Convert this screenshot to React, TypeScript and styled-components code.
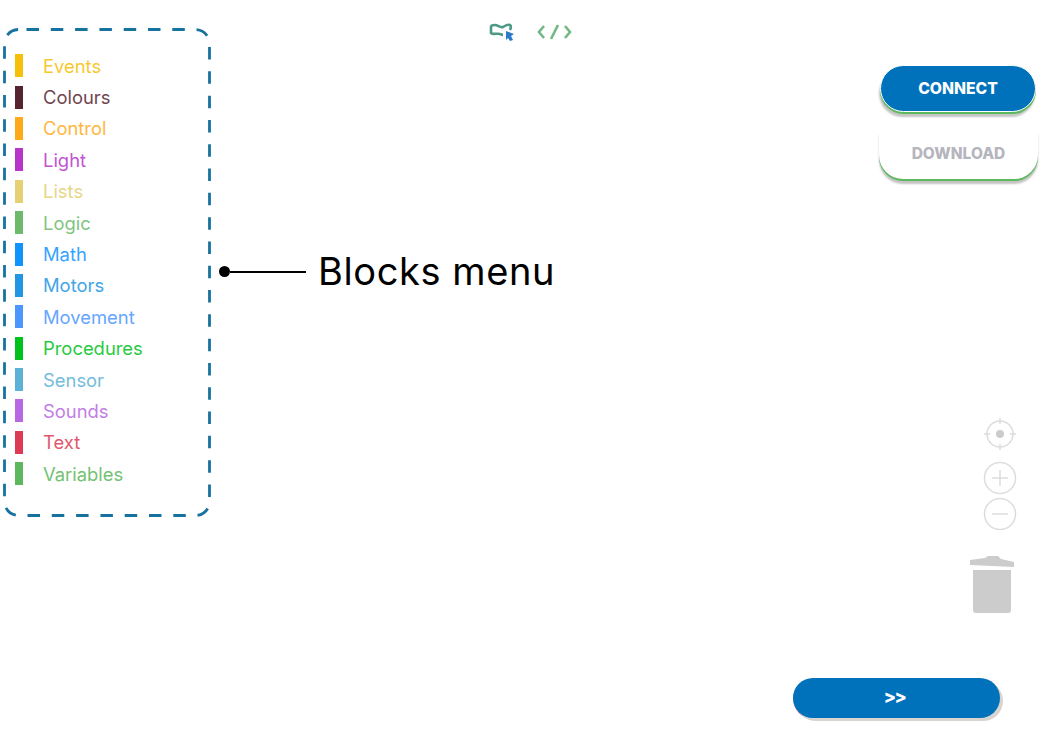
import styled, { createGlobalStyle } from "styled-components";

const GlobalStyle = createGlobalStyle`
  html, body { margin: 0; padding: 0; background: #fff; }
  * { box-sizing: border-box; }
`;

const Page = styled.div`
  width: 1064px;
  height: 736px;
  display: flex;
  overflow: hidden;
  font-family: Inter, "Liberation Sans", sans-serif;
`;

const BlocksPanel = styled.nav`
  position: relative;
  flex: none;
  width: 208px;
  height: 489px;
  margin: 28px 0 0 3px;
  padding: 22px 0 0 12px;
`;

const DashedFrame = styled.svg`
  position: absolute;
  inset: 0;
`;

const BlockRow = styled.div`
  display: flex;
  align-items: center;
  height: 31.4px;
  gap: 20px;
`;

const BlockBar = styled.span<{ $color: string }>`
  width: 8px;
  height: 23px;
  background: ${(p) => p.$color};
`;

const BlockName = styled.span<{ $color: string }>`
  color: ${(p) => p.$color};
  font-size: 18.4px;
  line-height: 24px;
  opacity: 0.85;
`;

const Middle = styled.div`
  flex: none;
  width: 559px;
  display: flex;
  flex-direction: column;
`;

const Toolbar = styled.div`
  display: flex;
  align-items: center;
  gap: 21px;
  height: 20px;
  margin: 22px 0 0 278px;
`;

const Callout = styled.div`
  display: flex;
  align-items: center;
  gap: 12px;
  margin: 206px 0 0 8px;
  height: 46px;
`;

const CalloutDot = styled.span`
  width: 11px;
  height: 11px;
  border-radius: 50%;
  background: #000;
`;

const CalloutLine = styled.span`
  width: 76px;
  height: 2px;
  margin: 1px 0 0 -12px;
  background: #000;
`;

const CalloutText = styled.span`
  color: #000;
  font-size: 38px;
  letter-spacing: 0.6px;
  line-height: 46px;
  white-space: nowrap;
`;

const RightSide = styled.div`
  flex: none;
  width: 294px;
  display: flex;
  flex-direction: column;
  align-items: flex-end;
  padding: 65px 0 0;
`;

const ConnectButton = styled.button`
  width: 156px;
  height: 47px;
  margin-right: 28px;
  border: 1.5px solid #fff;
  border-radius: 24px;
  background: #0072bc;
  box-shadow: 0 2px 0 #5cb85c, -1px 5px 2px #c4c4c4;
  color: #fff;
  font: 800 15.7px Inter, sans-serif;
`;

const DownloadButton = styled.button`
  width: 159px;
  height: 49px;
  margin: 18px 26px 0 0;
  padding-bottom: 3px;
  border: none;
  border-radius: 0 0 24px 24px;
  background: #fff;
  box-shadow: 0 2px 0 #5cb85c, 0 5px 2px #c4c4c4;
  color: #b5b5bd;
  font: 800 15.5px Inter, sans-serif;
`;

const MapControls = styled.div`
  display: flex;
  flex-direction: column;
  align-items: flex-end;
  margin: 238px 47px 0 0;
`;

const ZoomIcon = styled.svg<{ $top: number; $right?: number }>`
  display: block;
  margin-top: ${(p) => p.$top}px;
  margin-right: ${(p) => p.$right ?? 0}px;
`;

const NextButton = styled.button`
  width: 207px;
  height: 40px;
  margin: 64px 64px 0 0;
  padding: 0 4px 4px 0;
  border: none;
  border-radius: 20px;
  background: #0072bc;
  box-shadow: 3px 3px 0 #d8d4d0, 0 1px 0 #e59ab8;
  color: #fff;
  font: 800 18px Inter, sans-serif;
  letter-spacing: -1.5px;
`;

const blocks: [string, string][] = [
  ["Events", "#f5bf0a"],
  ["Colours", "#562431"],
  ["Control", "#ffab19"],
  ["Light", "#b835c9"],
  ["Lists", "#e5d074"],
  ["Logic", "#6cbb6b"],
  ["Math", "#0f94ff"],
  ["Motors", "#2196e3"],
  ["Movement", "#4c97ff"],
  ["Procedures", "#00c21d"],
  ["Sensor", "#5cb1d6"],
  ["Sounds", "#b868e0"],
  ["Text", "#dc3a55"],
  ["Variables", "#5cb85c"],
];

export default function App() {
  return (
    <Page>
      <GlobalStyle />
      <BlocksPanel>
        <DashedFrame width="208" height="489" viewBox="0 0 208 489">
          <rect x="1.5" y="1.5" width="205" height="486" rx="14" fill="none" stroke="#17729f" strokeWidth="2.8" strokeDasharray="12.5 11.8" strokeDashoffset="-8" />
        </DashedFrame>
        {blocks.map(([name, color]) => (
          <BlockRow key={name}>
            <BlockBar $color={color} />
            <BlockName $color={color}>{name}</BlockName>
          </BlockRow>
        ))}
      </BlocksPanel>

      <Middle>
        <Toolbar>
          <svg width="27" height="20" viewBox="0 0 27 20" fill="none">
            <path d="M2 5c0-2 2-2 4-2 3 0 5 3 8 2 2-1 4-3 7-2 1 1 1 3 0 5M2 5v6c2 2 6 0 9 1 1 0 2 1 3 1" stroke="#4c9a86" strokeWidth="2.6" />
            <path d="M17 9l8 3-3 2 2 4-3 1-2-3-2 2z" fill="#2b7ac9" />
          </svg>
          <svg width="35" height="18" viewBox="0 0 35 18" fill="none" stroke="#74b884" strokeWidth="2.6">
            <path d="M7 3L2 9l5 6M28 3l5 6-5 6" />
            <path d="M21 2l-7 14" />
          </svg>
        </Toolbar>
        <Callout>
          <CalloutDot />
          <CalloutLine />
          <CalloutText>Blocks menu</CalloutText>
        </Callout>
      </Middle>

      <RightSide>
        <ConnectButton>CONNECT</ConnectButton>
        <DownloadButton>DOWNLOAD</DownloadButton>
        <MapControls>
          <ZoomIcon $top={0} width="34" height="34" viewBox="0 0 34 34" fill="none" stroke="#ddd" strokeWidth="1.5">
            <circle cx="17" cy="17" r="13" />
            <path d="M17 1v6M17 27v6M1 17h6M27 17h6" />
            <circle cx="17" cy="17" r="4" fill="#ccc" stroke="none" />
          </ZoomIcon>
          <ZoomIcon $top={10} width="34" height="34" viewBox="0 0 34 34" fill="none" stroke="#ddd" strokeWidth="1.5">
            <circle cx="17" cy="17" r="15.5" />
            <path d="M17 9v16M9 17h16" />
          </ZoomIcon>
          <ZoomIcon $top={2} width="34" height="34" viewBox="0 0 34 34" fill="none" stroke="#ddd" strokeWidth="1.5">
            <circle cx="17" cy="17" r="15.5" />
            <path d="M9 17h16" />
          </ZoomIcon>
          <ZoomIcon $top={23} $right={2} width="46" height="60" viewBox="0 0 46 60">
            <path d="M1 6l15-2 3-2h10l3 3 13 3v5L1 11z" fill="#ccc" />
            <path d="M4 16h38v40a3 3 0 0 1-3 3H7a3 3 0 0 1-3-3z" fill="#ccc" />
          </ZoomIcon>
        </MapControls>
        <NextButton>&gt;&gt;</NextButton>
      </RightSide>
    </Page>
  );
}
